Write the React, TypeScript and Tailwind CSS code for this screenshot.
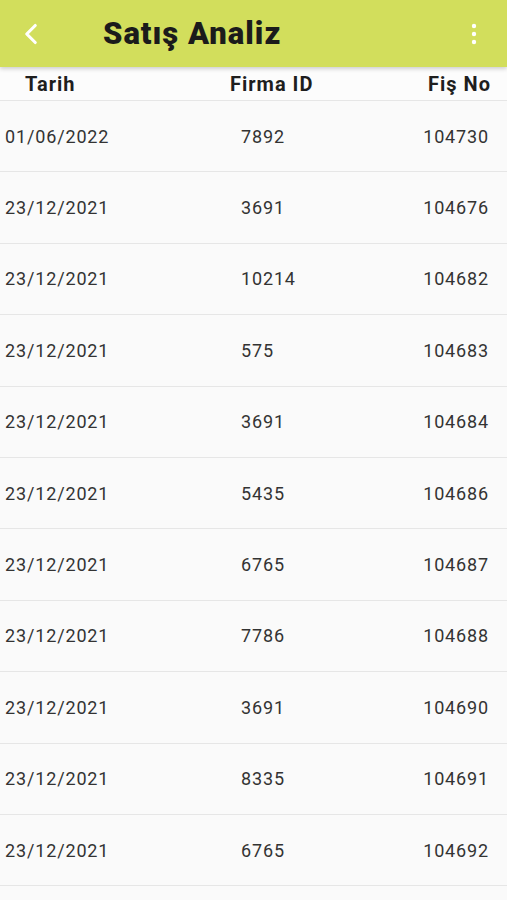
import { ChevronLeft } from 'lucide-react';

const ROWS: [string, string, string][] = [
  ['01/06/2022', '7892', '104730'],
  ['23/12/2021', '3691', '104676'],
  ['23/12/2021', '10214', '104682'],
  ['23/12/2021', '575', '104683'],
  ['23/12/2021', '3691', '104684'],
  ['23/12/2021', '5435', '104686'],
  ['23/12/2021', '6765', '104687'],
  ['23/12/2021', '7786', '104688'],
  ['23/12/2021', '3691', '104690'],
  ['23/12/2021', '8335', '104691'],
  ['23/12/2021', '6765', '104692'],
];

function KebabIcon() {
  return (
    <svg width="6" height="22" viewBox="0 0 6 22" className="text-white">
      <circle cx="3" cy="3" r="2.2" fill="currentColor" />
      <circle cx="3" cy="11" r="2.2" fill="currentColor" />
      <circle cx="3" cy="19" r="2.2" fill="currentColor" />
    </svg>
  );
}

export default function App() {
  return (
    <div className="w-[507px] h-[900px] overflow-hidden bg-[#fafafa] font-['Roboto','Liberation_Sans',sans-serif]">
      <header className="relative z-10 h-[67px] bg-[#d2de5c] flex flex-row items-center shadow-[0_2px_4px_rgba(0,0,0,0.18)]">
        <button type="button" className="ml-[13px] w-[36px] h-[36px] flex items-center justify-center text-white">
          <ChevronLeft size={34} strokeWidth={2.2} />
        </button>
        <h1 className="ml-[54px] text-[31px] font-black leading-none text-[#1b1b1b] tracking-[1px]">Satış Analiz</h1>
        <div className="flex-1" />
        <button type="button" className="mr-[30px] w-[6px] flex items-center justify-center">
          <KebabIcon />
        </button>
      </header>

      {/* column headings */}
      <div className="h-[34px] flex flex-row items-center border-b-[1.5px] border-[#e6e6e6] bg-[#fcfcfc] text-[20px] font-bold tracking-[1px] text-[#1e1e1e]">
        <div className="w-[230px] pl-[25px]">Tarih</div>
        <div className="flex-1">Firma ID</div>
        <div className="pr-[16px]">Fiş No</div>
      </div>

      {ROWS.map(([date, firm, receipt], i) => (
        <div
          key={i}
          className="h-[71.4px] flex flex-row items-center border-b-[1.5px] border-[#e6e6e6] text-[18px] tracking-[0.85px] text-[#333333]"
        >
          <div className="w-[241px] pl-[5px]">{date}</div>
          <div className="flex-1">{firm}</div>
          <div className="pr-[18px]">{receipt}</div>
        </div>
      ))}
    </div>
  );
}
